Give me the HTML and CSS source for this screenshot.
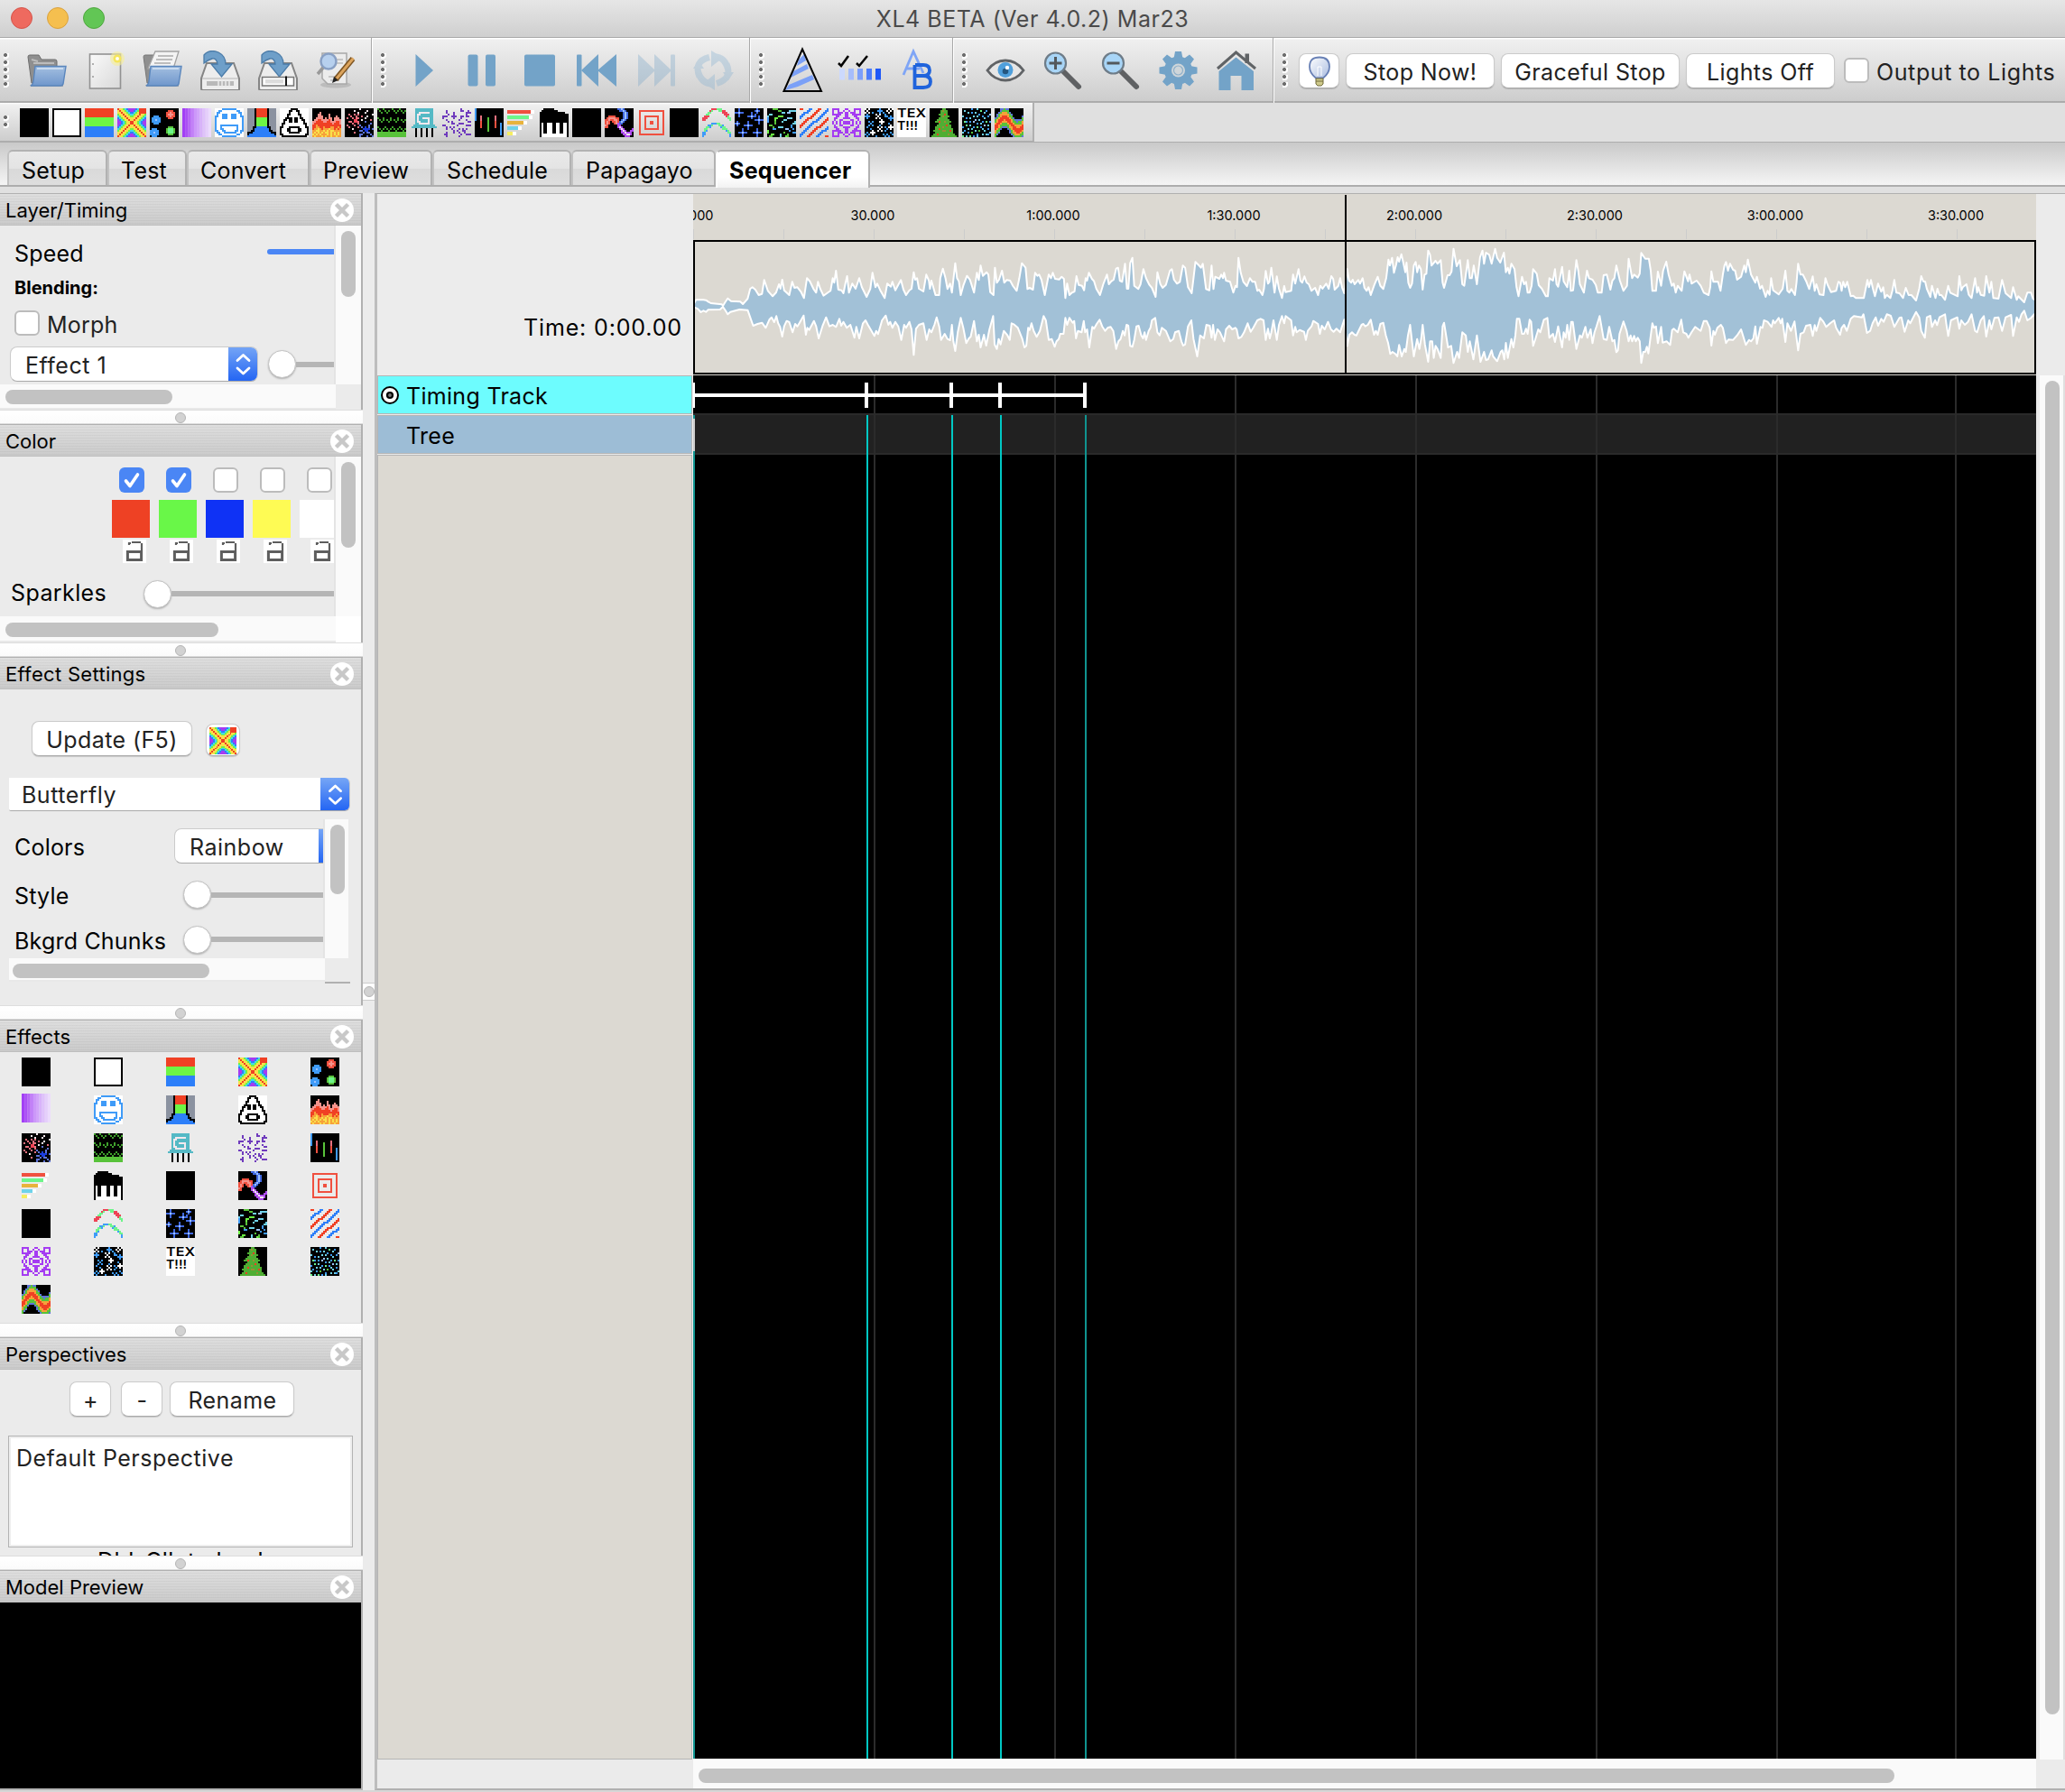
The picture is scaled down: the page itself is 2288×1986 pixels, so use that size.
FILE: index.html
```html
<!DOCTYPE html>
<html lang="en">
<head>
<meta charset="utf-8">
<title>XL4 BETA</title>
<link rel="stylesheet" href="styles.css">
</head>
<body>
<svg width="0" height="0" class="defs" aria-hidden="true">
  <defs>
    <linearGradient id="blueFolder" x1="0" y1="0" x2="0" y2="1"><stop offset="0" stop-color="#a3bfe0"/><stop offset="1" stop-color="#7097cc"/></linearGradient>
    <linearGradient id="paper" x1="0" y1="0" x2="1" y2="1"><stop offset="0" stop-color="#fafafa"/><stop offset="1" stop-color="#d9d9d9"/></linearGradient>
    <linearGradient id="bulbGlass" x1="0" y1="0" x2="1" y2="1"><stop offset="0" stop-color="#ffffff"/><stop offset="1" stop-color="#a9bce0"/></linearGradient>
    <symbol id="chev" viewBox="0 0 33 39"><path d="M10 15.5 L16.5 9.5 L23 15.5 M10 24 L16.5 30 L23 24" fill="none" stroke="#fff" stroke-width="2.8" stroke-linecap="round" stroke-linejoin="round"/></symbol>
    <symbol id="close" viewBox="0 0 26 26"><circle cx="13" cy="13" r="13" fill="#fff"/><path d="M8 8 L18 18 M18 8 L8 18" stroke="#c8c8c8" stroke-width="4.4" stroke-linecap="square"/></symbol>
    <symbol id="lock" viewBox="0 0 13 13"><rect width="13" height="13" fill="#fff"/><path d="M3.5 3 V2 H4.5 M5 1.5 H10 M10.5 2 V6" fill="none" stroke="#5e5e5e" stroke-width="1.1"/><path d="M2.700 6.700 H10.300 V11.300 H2.700 Z" fill="none" stroke="#5e5e5e" stroke-width="1.500"/></symbol>
    <symbol id="savebase" viewBox="0 0 44 44">
      <path d="M7 14 H37 L43 31 V43 Q43 44 41 44 H3 Q1 44 1 42 V31 Z" fill="#ededed" stroke="#858585" stroke-width="2"/>
      <path d="M4 5 Q10 -2 20 2 Q28 6 28 15 H35 L23.500 29 L12 15 H19 Q18 8 13 9 Q9 10 4 14 Z" fill="#6e9fc9" stroke="#4a7ba8" stroke-width="1.300"/>
    </symbol>
  </defs>
</svg>

<header class="titlebar">
  <div class="lights"><i class="red"></i><i class="amber"></i><i class="green"></i></div>
  <h1>XL4 BETA (Ver 4.0.2) Mar23</h1>
</header>

<div class="toolbar">
  <div class="group first w412"><span class="grip"><i></i><i></i><i></i><i></i><i></i></span>
    <svg class="ico" viewBox="0 0 44 44"><path d="M1 7 Q1 5 3 5 H13 L16 10 H31 Q33 10 33 12 V36 H5 Z" fill="#8f8f8f" stroke="#6d6d6d"/><path d="M5 10 L12 12 M7 14 H30" stroke="#bcbcbc" stroke-width="2"/><path d="M3 38 H40 V40 H4 Z" fill="#8a8a8a" opacity=".6"/><path d="M9 17.500 H43 L40 37 Q39.500 39 37 39 H4 Q6.500 38 7 34 Z" fill="url(#blueFolder)" stroke="#5a86bd" stroke-width="1.400"/><path d="M11 20 H40" stroke="#c9dbf0" stroke-width="2"/></svg>
    <svg class="ico" viewBox="0 0 44 44"><rect x="5.500" y="4" width="34" height="38" fill="url(#paper)" stroke="#929292" stroke-width="1.600"/><path d="M9 14 V16 M9 28 V30" stroke="#999" stroke-width="1.500"/><circle cx="36" cy="9" r="8" fill="#f6ef96" opacity=".6"/><circle cx="36" cy="9" r="4.500" fill="#f5e55c"/><circle cx="36" cy="9" r="2" fill="#fffef0"/></svg>
    <svg class="ico" viewBox="0 0 44 44"><path d="M1 7 Q1 5 3 5 H13 V36 H5 Z" fill="#8f8f8f" stroke="#777"/><path d="M14 1 H40 L34 20 H6 Z" fill="#f4f4f4" stroke="#a2a2a2" stroke-width="1.300"/><path d="M17 6 H34 M15 10 H33 M13 14 H31" stroke="#aaa" stroke-width="1.500"/><path d="M3 38 H40 V40 H4 Z" fill="#8a8a8a" opacity=".6"/><path d="M9 17.500 H43 L40 37 Q39.500 39 37 39 H4 Q6.500 38 7 34 Z" fill="url(#blueFolder)" stroke="#5a86bd" stroke-width="1.400"/><path d="M11 20 H40" stroke="#c9dbf0" stroke-width="2"/></svg>
    <svg class="ico" viewBox="0 0 44 44"><use href="#savebase"/><path d="M2 31 H42" stroke="#b5b5b5"/><rect x="7" y="34" width="30" height="5" fill="#b9b9b9"/><path d="M20 33 V40 M24 33 V40 M28 33 V40 M32 33 V40" stroke="#ececec" stroke-width="1.500"/></svg>
    <svg class="ico" viewBox="0 0 44 44"><use href="#savebase"/><rect x="4.500" y="29.500" width="35" height="9.500" fill="#fff" stroke="#777" stroke-width="1.500"/><rect x="8" y="32" width="20" height="4.500" fill="#dcdcdc"/><path d="M31 28.500 V39" stroke="#000" stroke-width="1.800"/></svg>
    <svg class="ico" viewBox="0 0 44 44"><ellipse cx="22" cy="38" rx="17" ry="3.500" fill="#aaa" opacity=".6"/><path d="M7 3 H34 V37 H13 L7 31 Z" fill="#ececec" stroke="#a8a8a8" stroke-width="1.500"/><path d="M22 10 H30 M22 14 H30 M14 29 H26 M16 33 H26" stroke="#bbb" stroke-width="1.500"/><circle cx="14" cy="12" r="8.500" fill="#b7d0ee" stroke="#89a0c4" stroke-width="2.500"/><path d="M8 19 L2 26" stroke="#999" stroke-width="3.500"/><path d="M41 9 L22 32" stroke="#7d5523" stroke-width="6"/><path d="M41.500 8.500 L23 31" stroke="#dca45d" stroke-width="3"/><path d="M18 36 L20 29 L24.500 33 Z" fill="#222"/></svg>
  </div>
  <div class="group w419"><span class="grip"><i></i><i></i><i></i><i></i><i></i></span>
    <svg class="ico steel" viewBox="0 0 44 44"><path d="M12.500 4 L32 22 L12.500 40 Z"/></svg>
    <svg class="ico steel" viewBox="0 0 44 44"><rect x="6.500" y="4.500" width="11" height="35" rx="2"/><rect x="26" y="4.500" width="11" height="35" rx="2"/></svg>
    <svg class="ico steel" viewBox="0 0 44 44"><rect x="5" y="4.500" width="34" height="35" rx="2"/></svg>
    <svg class="ico steel" viewBox="0 0 44 44"><rect x="-1" y="4.500" width="5.500" height="35" rx="1"/><path d="M23 4 V40 L4 22 Z M43 4 V40 L22 22 Z"/></svg>
    <svg class="ico steel dim" viewBox="0 0 44 44"><rect x="39" y="4.500" width="5" height="35" rx="1"/><path d="M3 4 V40 L22 22 Z M21 4 V40 L40 22 Z"/></svg>
    <svg class="ico dim" viewBox="0 0 44 44"><path d="M7 29 Q0 12 18 7.500 M26 36.500 Q44 31 37 15 M5 21 Q8 37 22 37 M39 23 Q36 7 24 7" fill="none" stroke="#7fadd0" stroke-width="7"/><path d="M20 0 L33 8 L20 18 Z M24 26 V44 L12 36 Z M33 24 H45 L39 33 Z M0 20 H12 L6 11 Z" fill="#7fadd0"/></svg>
  </div>
  <div class="group w225"><span class="grip"><i></i><i></i><i></i><i></i><i></i></span>
    <svg class="ico tall" viewBox="0 0 44 50"><path d="M18 13 L24 7 L26 14 L16 20 Z M12 26 L27 18 L29 23 L9 33 Z M7 41 L33 30 L35 35 L17 43 L3 47 Z" fill="#7ba0f7"/><path d="M22 1.500 L43 48 H1.500 Z" fill="none" stroke="#000" stroke-width="2"/></svg>
    <svg class="ico wide" viewBox="0 0 50 44"><path d="M1 14 L4 17 L12 6 M21 14 L24 17 L33 6" fill="none" stroke="#000" stroke-width="2.500"/><g><rect x="2" y="20" width="6" height="12.500" fill="#ccd9fd"/><rect x="12" y="20" width="6" height="12.500" fill="#a6bdfb"/><rect x="22" y="20" width="6" height="12.500" fill="#7b9efa"/><rect x="32" y="20" width="6" height="12.500" fill="#4c7cfa"/><rect x="42" y="20" width="6" height="12.500" fill="#1e58f8"/></g></svg>
    <svg class="ico" viewBox="0 0 44 44"><path d="M6 27 L17 1 L28 25 M10 20 H24" fill="none" stroke="#7fa5f6" stroke-width="2.800"/><path d="M19 16 H28 Q35 16 35 22 Q35 28 28 28 H19 M28 28 Q36 28 36 34.500 Q36 41 28 41 H18.500 V16" fill="none" stroke="#1f63dc" stroke-width="3.800"/></svg>
  </div>
  <div class="group w355"><span class="grip"><i></i><i></i><i></i><i></i><i></i></span>
    <svg class="ico" viewBox="0 0 44 44"><path d="M2 22 Q10 11 22 11 Q34 11 42 22 Q34 33 22 33 Q10 33 2 22 Z" fill="#e6e6e6" stroke="#606366" stroke-width="2.800"/><circle cx="22" cy="21.500" r="8.500" fill="#4f9fdb"/><circle cx="22" cy="23" r="3.300" fill="#26577f"/><circle cx="24" cy="19" r="2.200" fill="#fff"/></svg>
    <svg class="ico" viewBox="0 0 44 44"><path d="M21 22 L39 40" stroke="#5f6163" stroke-width="6" stroke-linecap="round"/><circle cx="13.500" cy="14" r="11.500" fill="#a8d5f7" stroke="#6e7c88" stroke-width="2.200"/><path d="M6.500 14 H20.500 M13.500 7 V21" stroke="#53585c" stroke-width="3"/></svg>
    <svg class="ico" viewBox="0 0 44 44"><path d="M21 22 L39 40" stroke="#5f6163" stroke-width="6" stroke-linecap="round"/><circle cx="13.500" cy="14" r="11.500" fill="#a8d5f7" stroke="#6e7c88" stroke-width="2.200"/><path d="M6.500 14 H20.500" stroke="#53585c" stroke-width="3"/></svg>
    <svg class="ico steel" viewBox="0 0 44 44"><circle cx="21.500" cy="22" r="15.500"/><path d="M18 1 h7 l1.500 8 h-10 z M18 43 h7 l1.500 -8 h-10 z M.5 18.500 v7 l8 1.500 v-10 z M42.500 18.500 v7 l-8 1.500 v-10 z M4 9.500 l5 -5 l7 5 l-7 7 z M39 9.500 l-5 -5 l-7 5 l7 7 z M4 34.500 l5 5 l7 -5 l-7 -7 z M39 34.500 l-5 5 l-7 -5 l7 -7 z"/><circle cx="21.500" cy="22" r="7.500" fill="#cfd6da"/><circle cx="21.500" cy="22" r="5" fill="none" stroke="#8fb0c9" stroke-width="1.200"/></svg>
    <svg class="ico" viewBox="0 0 44 44"><path d="M31.500 3.500 H36 V14 H31.500 Z" fill="#606366"/><path d="M1 20 L21.500 2 L43 20" fill="none" stroke="#606366" stroke-width="3"/><path d="M2.500 23 L21.500 7.500 L41 23 V44 H27.500 V28 H15.500 V44 H2.500 Z" fill="#73a3c8"/></svg>
  </div>
  <div class="group last"><span class="grip"><i></i><i></i><i></i><i></i><i></i></span>
    <button class="btn bulb"><svg viewBox="0 0 28 34"><path d="M14 1.500 Q25 1.500 25 12 Q25 19 18 24.500 H10 Q3 19 3 12 Q3 1.500 14 1.500 Z" fill="url(#bulbGlass)" stroke="#6880b5" stroke-width="1.800"/><path d="M12 22 V12 H16 V22" fill="none" stroke="#fff"/><path d="M10 25 H18 V31 L16 33 H12 L10 31 Z" fill="#cfca8c" stroke="#706a3a"/><path d="M10 28 H18" stroke="#706a3a"/></svg></button>
    <button class="btn b1">Stop Now!</button>
    <button class="btn b2">Graceful Stop</button>
    <button class="btn b3">Lights Off</button>
    <span class="check"></span><span class="outlab">Output to Lights</span>
  </div>
</div>

<div class="fxrow"><div class="fxbar"><span class="grip two"><i></i><i></i></span><div class="fxlist sprites"></div></div></div>

<nav class="tabs">
  <span class="tab t1">Setup</span><span class="tab t2">Test</span><span class="tab t3">Convert</span><span class="tab t4">Preview</span><span class="tab t5">Schedule</span><span class="tab t6">Papagayo</span><span class="tab t7 active">Sequencer</span>
</nav>

<main class="work">
  <aside class="side">
    <section class="panel p-layer">
      <h2>Layer/Timing<svg class="x"><use href="#close"/></svg></h2>
      <div class="scroller">
        <div class="content">
          <div class="row r-speed"><span>Speed</span><i class="track blue"></i></div>
          <div class="row r-blend">Blending:</div>
          <div class="row r-morph"><span class="check"></span><span class="soft">Morph</span></div>
          <div class="row r-effect"><span class="select"><b>Effect 1</b><svg class="chev"><use href="#chev"/></svg></span><i class="knob"></i><i class="track"></i></div>
        </div>
        <div class="vs"><i></i></div>
        <div class="hs"><i></i></div>
      </div>
    </section>
    <div class="sash"><i></i></div>
    <section class="panel p-color">
      <h2>Color<svg class="x"><use href="#close"/></svg></h2>
      <div class="scroller">
        <div class="content">
          <div class="colors">
            <div><span class="check on"><svg viewBox="0 0 28 28"><path d="M7.500 15 L12 20.500 L20.500 8" /></svg></span><i class="sw c1"></i><svg class="lk"><use href="#lock"/></svg></div>
            <div><span class="check on"><svg viewBox="0 0 28 28"><path d="M7.500 15 L12 20.500 L20.500 8" /></svg></span><i class="sw c2"></i><svg class="lk"><use href="#lock"/></svg></div>
            <div><span class="check"></span><i class="sw c3"></i><svg class="lk"><use href="#lock"/></svg></div>
            <div><span class="check"></span><i class="sw c4"></i><svg class="lk"><use href="#lock"/></svg></div>
            <div><span class="check"></span><i class="sw c5"></i><svg class="lk"><use href="#lock"/></svg></div>
          </div>
          <div class="row r-spark"><span>Sparkles</span><i class="knob"></i><i class="track"></i></div>
        </div>
        <div class="vs"><i></i></div>
        <div class="hs"><i></i></div>
      </div>
    </section>
    <div class="sash"><i></i></div>
    <section class="panel p-settings">
      <h2 class="loose">Effect Settings<svg class="x"><use href="#close"/></svg></h2>
      <div class="upd"><button class="btn">Update (F5)</button><span class="btn mini"><svg viewBox="0 0 16 16"><use href="#s-butterfly"/></svg></span></div>
      <div class="select wideSel"><b>Butterfly</b><svg class="chev"><use href="#chev"/></svg></div>
      <div class="inner">
        <div class="content">
          <div class="row r-colors"><span>Colors</span><span class="select cut"><b>Rainbow</b><em></em></span></div>
          <div class="row r-style"><span>Style</span><i class="knob"></i><i class="track"></i></div>
          <div class="row r-chunks"><span>Bkgrd Chunks</span><i class="knob"></i><i class="track"></i></div>
        </div>
        <div class="vs"><i></i></div>
        <div class="hs"><i></i></div>
        <div class="corner"></div>
      </div>
    </section>
    <div class="sash"><i></i></div>
    <section class="panel p-effects">
      <h2>Effects<svg class="x"><use href="#close"/></svg></h2>
      <div class="fxgrid sprites"></div>
    </section>
    <div class="sash"><i></i></div>
    <section class="panel p-persp">
      <h2>Perspectives<svg class="x"><use href="#close"/></svg></h2>
      <div class="pbtns"><button class="btn">+</button><button class="btn">-</button><button class="btn ren">Rename</button></div>
      <div class="list"><div>Default Perspective</div></div>
      <div class="hint"><span>Dbl-Clk to load</span></div>
    </section>
    <div class="sash"><i></i></div>
    <section class="panel p-preview">
      <h2>Model Preview<svg class="x"><use href="#close"/></svg></h2>
      <div class="black"></div>
    </section>
  </aside>
  <div class="vsash"><span><i></i></span></div>
  <section class="seq">
    <div class="time">Time: 0:00.00</div>
    <div class="right">
      <div class="ruler">
        <span class="zero">000</span><span>30.000</span><span>1:00.000</span><span>1:30.000</span><span>2:00.000</span><span>2:30.000</span><span>3:00.000</span><span>3:30.000</span>
      </div>
      <svg class="wave" viewBox="0 0 1488 150"><g class="shape"></g><rect x="1" y="1" width="1486" height="147" fill="none" stroke="#000" stroke-width="2"/></svg>
      <i class="playhead"></i>
    </div>
    <div class="gutter"></div>
    <div class="labels">
      <div class="lab timing"><svg viewBox="0 0 22 22"><circle cx="11" cy="11" r="9" fill="#fff" stroke="#000" stroke-width="2"/><circle cx="11" cy="11" r="3" fill="#777" stroke="#000" stroke-width="2.200"/></svg>Timing Track</div>
      <div class="lab tree">Tree</div>
      <div class="rest"></div>
    </div>
    <svg class="grid" viewBox="0 0 1488 1533">
      <rect width="1488" height="1533" fill="#000"/>
      <rect y="42" width="1488" height="46" fill="#2a2a2a"/><rect y="44" width="1488" height="42" fill="#212121"/>
      <path d="M201 0 V1533 M401 0 V1533 M601 0 V1533 M801 0 V1533 M1001 0 V1533 M1201 0 V1533 M1399 0 V1533" stroke="#2b2b2b" stroke-width="2"/>
      <path d="M193 44 V1533 M287 44 V1533 M341 44 V1533" stroke="#00c8c4" stroke-width="2"/>
      <path d="M1 44 V1533 M435 44 V1533" stroke="#109490" stroke-width="2"/>
      <path d="M1 48 V84" stroke="#ccc" stroke-width="2"/>
      <path d="M0 22 H434" stroke="#fff" stroke-width="4"/>
      <path d="M0 8 V36 M192 8 V36 M286 8 V36 M340 8 V36 M434 8 V36" stroke="#fff" stroke-width="4"/>
    </svg>
    <div class="bigv"><i></i></div>
    <div></div>
    <div class="bigh"><i></i></div>
    <div></div>
  </section>
</main>
<script src="app.js"></script>
</body>
</html>
```
FILE: styles.css
```css
* { box-sizing: border-box; }
body { margin: 0; width: 2288px; height: 1986px; overflow: hidden; display: flex; flex-direction: column; background: #d6d6d6; font-family: Inter, "Liberation Sans", sans-serif; font-size: 25px; letter-spacing: .2px; color: #000; }
i, em, b { font-style: normal; font-weight: 400; display: block; }
svg { display: block; flex: none; }
.defs { position: absolute; }
h1, h2 { margin: 0; font-weight: 400; }

.titlebar { height: 42px; flex: none; position: relative; display: flex; align-items: center; justify-content: center; background: linear-gradient(#e6e6e6, #cfcfcf); border-bottom: 1px solid #a9a9a9; }
.titlebar h1 { font-size: 25px; line-height: 40px; color: #4a4a4a; letter-spacing: .53px; }
.lights { position: absolute; left: 12px; top: 8px; display: flex; gap: 16px; }
.lights i { width: 24px; height: 24px; border-radius: 50%; }
.lights .red { background: #ee6a5f; border: 1px solid #d5544a; }
.lights .amber { background: #f5bf4f; border: 1px solid #d9a13d; }
.lights .green { background: #62c655; border: 1px solid #4fa73f; }

.toolbar { height: 72px; flex: none; display: flex; background: linear-gradient(#fff 0, #fff 1px, #f0f0f0 2px, #cdcdcd 70px, #a9a9a9 70px, #b0b0b0 72px); }
.group { display: flex; align-items: center; gap: 20px; height: 72px; padding-left: 7px; border-left: 1px solid #fff; border-right: 1px solid #a9a9a9; }
.group.first { padding-left: 2px; border-left: 0; }
.w412 { width: 412px; } .w419 { width: 419px; } .w225 { width: 225px; } .w355 { width: 355px; }
.group.last { flex: 1; gap: 0; border-right: 0; padding-top: 1px; }
.grip { width: 8px; flex: none; display: flex; flex-direction: column; gap: 1px; padding-left: 2px; }
.grip i { width: 6px; height: 7px; background: radial-gradient(circle at 2px 2px, #6d6d6d 0 1.800px, #fff 2.300px 4px, transparent 4.500px); }
.ico { width: 44px; height: 44px; overflow: visible; }
.ico.tall { height: 50px; }
.ico.wide { width: 50px; margin: 0 -3px; }
.steel { fill: #73a3c8; }
.dim { opacity: .32; }
.btn { height: 39px; border: 1px solid #cbcbcb; border-bottom-color: #aaa; border-radius: 8px; background: #fff; box-shadow: 0 1px 1px rgba(0,0,0,.15); font: inherit; letter-spacing: .4px; color: #222; padding: 2px 0 0; text-align: center; line-height: 34px; white-space: nowrap; }
.bulb { width: 45px; margin-left: 12px; padding: 1px 0 0 8px; }
.bulb svg { width: 28px; height: 34px; }
.b1 { width: 165px; margin-left: 7px; } .b2 { width: 198px; margin-left: 7px; } .b3 { width: 165px; margin-left: 7px; }
.check { width: 28px; height: 28px; flex: none; border: 2px solid #bcbcbc; border-radius: 6px; background: #fff; }
.check.on { background: #4a86f5; border: 0; }
.check path { fill: none; stroke: #fff; stroke-width: 3.600; stroke-linecap: round; stroke-linejoin: round; }
.last .check { margin: -2px 0 0 10px; }
.outlab { margin-left: 8px; padding-top: 3px; color: #222; white-space: nowrap; letter-spacing: .6px; }

.fxrow { height: 44px; flex: none; background: #e0e0e0; border-bottom: 1px solid #adadad; }
.fxbar { width: 1146px; height: 43px; display: flex; align-items: center; padding: 1px 0 0 2px; background: linear-gradient(#fff, #f0f0f0 2px, #cdcdcd); border-right: 2px solid #b0b0b0; border-bottom: 1px solid #adadad; }
.fxlist { display: flex; gap: 4px; margin-left: 12px; }
.sprites svg { width: 32px; height: 32px; }

.tabs { height: 56px; flex: none; display: flex; align-items: flex-start; padding: 8px 0 0 8px; background: linear-gradient(#c9c9c9, #f5f5f5 47px, #adadad 47px, #adadad 49px, #e0e0e0 49px); }
.tab { height: 39px; padding-left: 14px; line-height: 43px; white-space: nowrap; border: 2px solid #b2b2b2; border-bottom: 0; border-left-color: #c2c2c2; border-radius: 6px 6px 0 0; background: linear-gradient(#e9e9e9, #e4e4e4 50%, #d9d9d9 50%, #dedede); }
.t1 { width: 111px; } .t2 { width: 88px; } .t3 { width: 136px; } .t4 { width: 136px; } .t5 { width: 154px; } .t6 { width: 160px; } .t7 { width: 171px; }
.t2, .t3, .t4 { padding-left: 13px; }
.tab.active { height: 42px; padding-left: 13px; font-weight: 700; letter-spacing: .3px; border-left-color: #fff; background: linear-gradient(#fff 70%, #f2f2f2); }

.work { flex: 1; display: flex; min-height: 0; }
.side { width: 402px; height: 1770px; flex: none; border-bottom: 2px solid #b5b5b5; }
.panel { width: 402px; border-right: 2px solid #b0b0b0; background: #ebebeb; overflow: hidden; }
.panel h2 { height: 36px; display: flex; align-items: center; justify-content: space-between; padding: 1px 8px 0 6px; font-size: 22px; letter-spacing: 0; border-top: 1px solid #b0b0b0; border-bottom: 1px solid #bdbdbd; background: repeating-linear-gradient(transparent 0 2px, rgba(0,0,0,.035) 2px 3px), linear-gradient(#dedede, #cbcbcb); }
.panel h2.loose { letter-spacing: .3px; }
.x { width: 26px; height: 26px; }
.p-layer { height: 240px; } .p-color { height: 242px; } .p-settings { height: 386px; } .p-effects { height: 336px; } .p-persp { height: 242px; } .p-preview { height: 242px; }
.sash { width: 402px; height: 16px; background: linear-gradient(#fff, #fbfbfb); border-top: 1px solid #ddd; border-bottom: 1px solid #ddd; padding: 2px 0 0 194px; }
.sash i, .vsash i { width: 12px; height: 12px; border-radius: 50%; background: #d2d2d2; border: 1px solid #b5b5b5; }

.scroller { display: grid; grid-template-columns: 372px 28px; grid-template-rows: 176px 28px; }
.p-color .scroller { grid-template-rows: 177px 29px; background: linear-gradient(90deg, transparent 370px, #fff 370px); }
.content { overflow: hidden; border-right: 2px solid #e4e4e4; background: #ebebeb; }
.vs { background: #fafafa; padding: 6px 0 0 6px; }
.vs i { width: 16px; height: 73px; border-radius: 8px; background: #c2c2c2; }
.hs { background: #fafafa; border-bottom: 2px solid #e8e8e8; padding: 6px 0 0 6px; }
.hs i { width: 185px; height: 16px; border-radius: 8px; background: #c2c2c2; }
.p-color .vs i { height: 95px; } .p-color .hs i { width: 236px; } .p-color .hs { padding-top: 7px; }
.row { display: flex; align-items: center; white-space: nowrap; }
.row > span:first-child { flex: none; }
.track { height: 6px; flex: 1; background: #b5b5b5; }
.track.blue { background: #4a86f5; border-radius: 3px 0 0 3px; }
.knob { width: 31px; height: 31px; flex: none; border-radius: 50%; background: #fff; border: 1px solid #c2c2c2; box-shadow: 0 1px 2px rgba(0,0,0,.25); }
.r-speed { height: 60px; padding-left: 16px; }
.r-speed > span:first-child { width: 280px; padding-top: 2px; }
.r-speed .track { margin-top: -2px; }
.r-blend { height: 18px; padding-left: 16px; font-weight: 700; font-size: 20px; letter-spacing: 0; }
.r-morph { height: 55px; padding: 5px 0 0 16px; gap: 8px; color: #222; }
.soft { padding-top: 3px; }
.r-effect { height: 40px; padding: 1px 0 0 11px; }
.select { display: flex; width: 275px; height: 39px; flex: none; background: #fff; border: 1px solid #cbcbcb; border-bottom-color: #aaa; border-radius: 8px; overflow: hidden; color: #222; letter-spacing: .5px; }
.select b { flex: 1; padding: 3px 0 0 16px; line-height: 35px; }
.chev { width: 33px; height: 39px; margin: -1px -1px -1px 0; background: linear-gradient(#76a6f6, #2264f3); }
.r-effect .knob { margin-left: 11px; }
.colors { display: flex; gap: 10px; padding: 12px 0 0 124px; }
.colors > div { width: 42px; flex: none; }
.colors .check { display: block; margin: 0 0 8px 8px; }
.sw { width: 42px; height: 42px; }
.c1 { background: #ee4124; } .c2 { background: #69f748; } .c3 { background: #0f32f5; } .c4 { background: #fefb54; } .c5 { background: #fff; }
.lk { width: 26px; height: 26px; margin: 2px 0 0 12px; }
.r-spark { height: 36px; margin-top: 16px; padding-left: 12px; }
.r-spark > span:first-child { width: 147px; letter-spacing: .4px; padding-bottom: 2px; }

.upd { display: flex; padding: 35px 0 0 35px; height: 98px; }
.upd .btn { width: 178px; }
.upd .mini { width: 38px; height: 36px; margin: 3px 0 0 15px; padding: 3px; }
.mini svg { width: 30px; height: 30px; }
.wideSel { width: 378px; height: 37px; margin-left: 10px; border-radius: 0 6px 6px 2px; border-top: 0; border-left: 0; }
.wideSel b { padding: 0 0 0 14px; line-height: 39px; }
.wideSel .chev { height: 37px; margin: 0 -1px 0 0; }
.inner { display: grid; grid-template-columns: 350px 28px; grid-template-rows: 154px 28px; margin: 9px 0 0 10px; }
.r-colors { height: 58px; padding-top: 1px; }
.inner .row .cut { width: 172px; border-radius: 8px 0 0 8px; margin-left: 9px; }
.cut b { padding-left: 16px; }
.cut em { width: 11px; margin: -1px 0; background: linear-gradient(#76a6f6, #2264f3); }
.r-style { height: 51px; } .r-chunks { height: 48px; }
.inner .row > span:first-child { width: 174px; padding: 3px 0 0 6px; }
.inner .knob { margin-left: 19px; }
.inner .vs { width: 26px; } .inner .vs i { height: 77px; }
.inner .hs { padding-left: 4px; height: 26px; } .inner .hs i { width: 218px; }
.corner { border-bottom: 2px solid #b0b0b0; height: 28px; }

.fxgrid { display: grid; grid-template-columns: repeat(5, 32px); column-gap: 48px; row-gap: 10px; padding: 6px 0 0 24px; }
.fxgrid svg:nth-child(6) { margin-top: -2px; }

.pbtns { display: flex; padding: 13px 0 0 77px; gap: 11px; }
.pbtns .btn { width: 46px; padding-left: 1px; }
.pbtns .ren { width: 138px; margin-left: -3px; }
.list { width: 382px; height: 124px; margin: 21px 0 0 9px; border: 1px solid #b3b3b3; background: #fff; box-shadow: inset 0 0 0 2px #eee; padding: 8px 0 0 8px; line-height: 32px; color: #222; letter-spacing: .5px; }
.hint { height: 10px; overflow: hidden; padding-left: 108px; line-height: 31px; letter-spacing: .5px; }
.black { height: 206px; background: #000; }

.vsash { width: 13px; flex: none; height: 1770px; background: #ebebeb; padding-top: 875px; }
.vsash span { display: block; height: 20px; background: #fff; border-top: 1px solid #ccc; border-bottom: 1px solid #ccc; padding: 3px 0 0 1px; }
.seq { flex: 1; height: 1770px; border: solid #b0b0b0; border-width: 1px 0 2px 3px; border-left-color: #bdbdbd; display: grid; grid-template-columns: 350px 1488px 32px; grid-template-rows: 201px 1534px 32px; background: #ebebeb; }
.time { background: #ececec; text-align: right; padding: 131px 12px 0 0; line-height: 34px; font-size: 25px; letter-spacing: .85px; }
.right { position: relative; padding-top: 1px; background: #dcd9d2; }
.ruler { height: 50px; display: flex; padding-left: 99px; background: repeating-linear-gradient(90deg, #ccc 0 1px, transparent 1px 100px) 0 38px / 100% 11px no-repeat; font-size: 14.500px; letter-spacing: 0; line-height: 46px; }
.ruler span { width: 200px; flex: none; text-align: center; }
.ruler .zero { width: 123px; margin-left: -99px; margin-right: -24px; text-align: left; text-indent: -5px; overflow: hidden; }
.wave { width: 1488px; height: 150px; }
.playhead { position: absolute; left: 722px; top: 1px; width: 2px; height: 199px; background: #000; }
.labels { display: flex; flex-direction: column; border-right: 1px solid #eee; }
.lab { height: 43px; margin-bottom: 1px; border: 1px solid #b5b5b5; display: flex; align-items: center; padding: 2px 0 0 2px; letter-spacing: .3px; }
.lab svg { width: 22px; height: 22px; margin: -2px 7px 0 0; }
.timing { background: #6dfcfe; }
.tree { background: #9dbdd6; padding-left: 31px; }
.rest { flex: 1; background: #dcd9d2; border: 1px solid #b5b5b5; }
.grid { width: 1488px; height: 1533px; }
.bigv { margin-left: 4px; background: #fafafa; border-right: 2px solid #e0e0e0; padding: 6px 0 0 6px; }
.bigv i { width: 16px; height: 1478px; border-radius: 8px; background: #c2c2c2; }
.bigh { background: #fafafa; padding: 10px 0 0 6px; }
.bigh i { width: 1325px; height: 16px; border-radius: 8px; background: #c2c2c2; }
```
FILE: app.js
```js
const NS = 'http://www.w3.org/2000/svg';

/* ---- effect icons: 16x16 pixel sprites ---- */
const PAL = {
  k: '#000', w: '#fff', r: '#f04024', g: '#6df545', b: '#2d7ff9', A: '#3f9bf8', N: '#8b92a0',
  F: '#f4938c', o: '#f7a13a', y: '#f8e04a', P: '#e8707e', R: '#ee4355', W: '#f3e9ee', V: '#5f74d8', U: '#1a3de0',
  L: '#3fa02c', M: '#58c23a', T: '#55b9c5', Q: '#6f3bbd', E: '#b04df0', D: '#4169e1', c: '#42d7f0', p: '#a53cf2',
  O: '#e8b33c', C: '#6fd3ea', Y: '#f5ee62', H: '#9cc3ff', S: '#f0503f', m: '#4fae33', X: '#9a8f35', Z: '#6df58a', B: '#3a5fe0', t: '#1d7f86'
};
const rows = s => s.trim().split(/\s+/);
const fn = f => Array.from({ length: 16 }, (_, y) => Array.from({ length: 16 }, (_, x) => f(x, y)).join(''));
const mirror = q => { const t = rows(q).map(r => r + [...r].reverse().join('')); return t.concat([...t].reverse()); };

const SPRITES = {
  off: fn(() => 'k'),
  on: fn((x, y) => (x % 15 && y % 15) ? 'w' : 'k'),
  bars: fn((x, y) => y < 5 ? 'r' : y < 10 ? 'g' : 'b'),
  butterfly: fn((x, y) => (x > 11 && y < 3) ? 'r' : 'ryygcbppp'[Math.min(Math.abs(x - y), Math.abs(15 - x - y))]),
  circles: rows(`kkkkkkkkkkkkkkkk kkkkkkkkkkSSSkkk kkkkkkkkkSSFSSkk kkkkkkkkkSFFFSkk kkAAAkkkkSSFSSkk kAAAAAkkkkSSSkkk kAAHAAkkkkkkkkkk
    kAAAAAkkkkkkkkkk kkAAAkkkkkkkkkkk kkkkkkkkkkkkkkkk kkkkkkkkkkMMMkkk kAAAkkkkkMZZZMkk AAAAAkkkkMZZZMkk AAHAAkkkkMZZZMkk AAAAAkkkkkMMMkkk kAAAkkkkkkkkkkkk`),
  fill: null,
  face: rows(`wwwwAAAAAAAAwwww wwAAwwwwwwwwAAww wAAwwwwwwwwwwAAw wAwwAAAwwAAAwwAw AAwwAAAwwAAAwwAA AwwwAAAwwAAAwwwA AwwwwwwwwwwwwwwA
    AwwwwwwwwwwwwwwA AwwwwwwwwwwwwwwA AwwAAAAAAAAAAwwA AwwAwwwwwwwwAwwA AwwAAwwwwwwwAwwA AAwwAAwwwwwAAwAA wAAwwAAAAAAAwwAw wwAAwwwwwwwwAAww wwwwAAAAAAAAwwww`),
  fan: rows(`NNNNkrrrrrrkNNNN NNNNkrrrrrrkNNNN NNNNkrrrrrrkNNNN NNNNkrrrrrrkNNNN NNNNkrrrrrrkNNNN NNNNkggggggkNNNN NNNNkggggggkNNNN NNNNkggggggkNNNN
    NNNNkggggggkNNNN NNNNkggggggkNNNN NNNkkbbbbbbkkNNN NNNkbbbbbbbbkNNN NNkkbbbbbbbbkkNN kkkbbbbbbbbbbkkk kbbbbbbbbbbbbbbk bbbbbbbbbbbbbbbb`),
  ghost: rows(`wwwwwwkkkkwwwwww wwwwwkkwwkkwwwww wwwwwkwwwwkwwwww wwwwkkwwwwkkwwww wwwwkwwwwwwkwwww wwwkkkkwkkwkkwww wwkkwkkwkkwwkkww wwkwwkkwkkwwwkww
    wkkwwwwwwwwwwkkw wkwwwwwwwwwwwwkw kkwwwkkkkkkwwwkk kwwwkkwwwwkkwwwk kwwwkkwwwwkkwwwk kwwwwkkkkkkwwwwk kkwwwwwwwwwwwwkk wkkkkkkkkkkkkkkw`),
  fire: rows(`kkkkkkkkkkkkkkkk kkkkkkkkkkkkkkkk kkkkFkkkkkkkkkkk kkkFFkkkkFkkkkkk kkkFFFkkkFkkkFkk kkFFFFkFkFFkFFFk kFFrrFFFFrFkFFFF FFrrrrFFrrFFFrrF
    FrrrrrrrrrrFrrrF rrorrrrrrrrrrrrr rroorrorrroorror rooyoroooyoororo ooyyooyoyoyyoooo oyoyoyoyyoyoyoyo yoyoyoooyoyoyoyo oyoooyoyooyooyoo`),
  works: rows(`kkkkkkkkWkkkkkkk kkkkkWkkkkkkWkkk kkkkkkkWkkkWkkkk kkPkkPkPkkkkkkkW kkkPkkPkkPkkWkkk kPkkPkPPkkkWkkkk kkkkkRRkkWkkkkPk kkPPkRRPkkkVkkkk
    kkkkPkkPkkkkkkVk kPkkkPkkVkkkkVkk kkPkkkkPkVkUkVkk kkkkWkkkkkUUUUkV kkkkkkkkVVkUUkkk kkkkkPkkkkVkVVkk kkkkkkkkVVkkkkVk kkkkkkkkVkkkVkkV`),
  garland: rows(`LkkLkkkkLkkkLkkk kLkkLkLkkLkLkLkL kkLkkLkkkkLkkkLk kkkkkkkkkkkkkkkk kkkkkkkkkkkkkkkk LkkLkkkLkkkLkkkk kLkLkLkLkLkLkLkL kkLkkkLkkkLkkkLk
    kkkkkkkkkkkkkkkk kkkkkkkkkkkkkkkk LkkkLkkkLkkkLkkk kLkLkLkLkLkLkLkL kkLkkkLkkkLkkkLk MMMMMMMMMMMMMMMM MMMMMMMMMMMMMMMM MMMMMMMMMMMMMMMM`),
  jelly: rows(`...TTTTTTTTTT... ...TTTTTTTTTT... ...TTWWWWWWTT... ...TWWTTTTTTT... ...TWTTTTTTTT... ...TWTTWWWWTT... ...TWTTTTTWTT... ...TWWTTTTWTT...
    ...TTWWWWWWTT... ..TTTTTTTTTTTT.. .TTTTTTTTTTTTTT. ...k..k..k..k... ...k..k..k..k... ...k..k..k..k... ...k..k..k..k... ...k..k..k..k...`),
  life: rows(`..........Q..... ..Q.......QQ..Q. ..Q...Q......QQQ ...Q..Q......Q.. QQQ..QQQ..QQ.QQ. Q.....Q...Q..... ..Q......Q...Q.. ...Q.Q........QQ
    .....QQ..QQQ.... QQ......Q....QQQ ..Q.Q.Q......... ..Q..Q...Q.Q.Q.. ......Q.Q..QQ... ..Q...Q..Q..Q... .QQ.......Q..QQQ ..Q......Q......`),
  meteors: fn((x, y) => x === 0 && y < 7 ? 'A' : x === 3 && y > 3 && y < 11 ? (y < 7 ? 'P' : 'S') : x === 7 && y > 4 && y < 13 ? 'M' : x === 11 && y > 3 && y < 11 ? (y < 7 ? 'P' : 'S') : x === 14 && y > 7 && y < 15 ? 'A' : 'k'),
  music: fn((x, y) => { const i = Math.floor((y - 1) / 3); if (y < 1 || (y - 1) % 3 > 1 || i > 4) return '.'; const e = [13, 12, 9, 6, 3][i]; return x < e ? 'SZOCY'[i] : x < e + 2 ? 'w' : '.'; }),
  piano: rows(`..kkkkkk........ .kkkkkkkkk...... kkkkkkkkkkkkkk.. kkkkkkkkkkkkkkkk kkkkkkkkkkkkkkkk kkkkkkkkkkkkkkkk kkkkkkkkkkkkkkkk kkkkkkkkkkkkkkkk
    kwkkwwwkkwwkkwwk kwkkwwwkkwwkkwwk kwkkwwwkkwwkkwwk kwkkwwwkkwwkkwwk kwkkwwwkkwwkkwwk kwkkwwwkkwwkkwwk kwwwwwwwwwwwwwwk kwwwwwwwwwwwwwwk`),
  pics: fn(() => 'k'),
  pinwheel: rows(`kkkkkkkDDHDkkkkk kkkkkkkkDDHDkkkk kkkkkkkkkkDHDkkk kkkkkkkkkkDHDkkk kkSSSSkkkkDHDkkk kSFFFFSSkkDHDkkk SSFSSFFSkDHDkkkk SFSkSSFSDHDkkkkk
    SFSkkSFEDDkkkkkk FSkkkkkEEkkkkkkk SSkkkkkEWEkkkkkk kkkkkkkkEWEkkkkE kkkkkkkkkEWEkkEE kkkkkkkkkEEWEEEk kkkkkkkkkkEEWWEk kkkkkkkkkkkEEEkk`),
  ripple: fn((x, y) => { const d = Math.max(Math.abs(x - 7.5), Math.abs(y - 7.5)); return d === 6.5 || d === 3.5 || d < 1 ? 'S' : '.'; }),
  shader: fn(() => 'k'),
  arches: rows(`.....RRRZZZ..... ....RZ...ZZRR... ...ZZ......RRR.. ..ZZ........RRR. .RRR.........RZ. RRR...........ZZ RR.............Z ................
    .....AAAZZ...... ...AAZ...ZZA.... ..ZZA.....AZZ.. .ZZ........ZZZ.. .ZA..........AZ. AA............ZZ AA.............A A..............A`),
  stars: rows(`kkDkkkkkkkkkDkkk kkDkkkkkkkkDHDkk DDHDDkkkkDkkDkkk kkDkkkkkkDkDkkkk kkDkkkkDDHDDkDkk kkkkkkkkkDkkkDkk kkkkkkkkkkkDDHDD kDkkkkkDkkkkkDkk
    DHDkkkkDkkkkkDkk kDkkkDDHDDkkkkkk kkkkkkkDkkkkkkkk kkkkDkkDkkkkDkkk kkkkDkkkkkkkDkkk kkDDHDDkkkDDHDDk kkkkDkkkkkkkDkkk kkkkDkkkkkkkDkkk`),
  snakes: rows(`kkkMMMkkkkkkkkkk kkkkkkMMkkkkCCCC kkkkkkkkCCkHHkkk kCCkkkkkkkkkkkkk Ckkkkkgggkkkkkkk AkkkggkkkkkHCCkk AkkkgkkkkCCkkkkk AkkkMkkkCkkkkkkC
    kkkkMkkkkkkkkkCC kMMkkkkkkkkkkAkk kkkMkkCCCkkkkAkk kkkAAkkkkkHHkkAk gkkkkkkkkkkkAkkk gkkkkkkkkMkkkkAA kkggkkkCkkkMkkkk kMMkkkkCkkgMkkkk`),
  stripes: fn((x, y) => { const v = (x + y + (x > y ? 0 : 1) + 15) % 10; return v < 2 ? 'b' : v >= 5 && v < 7 ? 'r' : '.'; }),
  kalei: mirror('pppp...p p..p..p. p..ppp.p ppppp..p ..pp...p .pp...pp .p..pp.. p.p.p.pp'),
  flakes: rows(`wkwkkkkkAkkkkwkw kwkkkkkAAAkkwkwk wkwkAkkkAkAkkwkk kAkkkkwkwkkAkkkk AAAkkkkwkkkAAkAk kAkkkkwkwkkkkAAA kkkkkkkkkwkkkkAk kkAkAkkkwwwkkkkk
    kkkAkkkkkwkkkAkk kkAkAkkkAkkkkkwk kAkkkkkwkwkAkwww kkkAkkkkwkkkAkwk kkkkwkkwkwkAkkkk kAkwwwkkkkkkkkAk AkAkwkkkkkAkAkkA kAkkkkAkkkkAkAkk`),
  text: null,
  tree: rows(`kkkkkkkmmkkkkkkk kkkkkkmXmmkkkkkk kkkkkkmmmmkkkkkk kkkkkmmmrmkkkkkk kkkkkkmXmmmkkkkk kkkkkmmmmmkkkkkk kkkkmmmmmmmkkkkk kkkmmrmmXmmmkkkk
    kkkkkmmmmmmkkkkk kkkkmmmmmrmmkkkk kkkmmmmXmmmmkkkk kkkmmrmmmmmmmkkk kkmmmmmXXmmrmkkk kkkmmmmmmmmmmkkk kkmmrmmmmmXmmmkk kmmmmmmmmmmmmmmk`),
  twinkle: rows(`kkkkkAkkCkkkkkkk kCkkkkkkkkZkkAkk kkkCkAkCkkkkCkkk kkkkkkkkkAkkkkkH CkkkkkCkCkkAkkAk kkAkCkkkkkkkCkkk kkkkkkkHkCkkkkkk kZAkAkHkkkkAkZkA
    kkkkkkkkAkCkkkkk kkZkCkkkkkkkHkCk AkkkkkAkZkAkkkkk kkkCkCkkkkkCkkAk kAkkkkkCkMkkCkkk CkkAkMkkkkkkkkkC kkkkkkkkAkkCkCAk ZkCkZkAkCkkkkkkk`),
  wave: fn((x, y) => { const d = Math.abs(y - (8.2 - 3.7 * Math.sin((x - 1.4) / 7.3 * Math.PI))); return d < 1.3 ? 'r' : d < 2.9 ? 'o' : d < 4.8 ? 'M' : d < 6 ? 'V' : 'k'; })
};

const el = (tag, attrs, parent) => {
  const e = document.createElementNS(NS, tag);
  for (const k in attrs) e.setAttribute(k, attrs[k]);
  parent.appendChild(e);
  return e;
};
const defs = document.querySelector('.defs defs');
for (const [name, grid] of Object.entries(SPRITES)) {
  const sym = el('symbol', { id: 's-' + name, viewBox: '0 0 16 16' }, defs);
  if (name === 'fill') {
    ['#a23ff5', '#ab50f5', '#b767f6', '#c281f8', '#cc98f9', '#d2a4fa', '#d8b3fa', '#dfc2fb', '#e5cffb', '#ecdcfc']
      .forEach((c, i) => el('rect', { x: i * 1.6, width: 1.7, height: 16, fill: c }, sym));
  } else if (name === 'text') {
    const type = { x: 0, 'font-size': 6.6, 'font-weight': 600, 'letter-spacing': 0, 'font-family': 'Inter, sans-serif', lengthAdjust: 'spacingAndGlyphs' };
    el('rect', { width: 16, height: 16, fill: '#fff' }, sym);
    el('text', { ...type, y: 5, textLength: 16 }, sym).textContent = 'TEX';
    el('text', { ...type, y: 12, textLength: 11.5 }, sym).textContent = 'T!!!';
  } else {
    grid.forEach((line, y) => {
      for (let x = 0; x < 16;) {
        let n = 1;
        while (x + n < 16 && line[x + n] === line[x]) n++;
        if (PAL[line[x]]) el('rect', { x, y, width: n, height: 1, fill: PAL[line[x]], 'shape-rendering': 'crispEdges' }, sym);
        x += n;
      }
    });
  }
}
document.querySelectorAll('.sprites').forEach(box => {
  Object.keys(SPRITES).forEach(n => el('use', { href: '#s-' + n }, el('svg', { viewBox: '0 0 16 16' }, box)));
});

/* ---- audio waveform envelope: x0/sx place each stretch of samples, y is in thirds of a pixel ---- */
const WAVE = [
  { x0: -358, sx: 2.45,
    top: '877,400 885,382 905,382 912,383 918,388 925,393 955,397 958,402 965,388 971,377 980,386 1005,388 1012,396 1018,388 1025,378 1032,345 1038,340 1046,348 1055,366 1064,362 1070,316 1080,352 1093,370 1102,358 1110,330 1114,345 1119,315 1124,350 1138,366 1146,322 1152,342 1160,340 1170,356 1178,376 1186,310 1194,320 1204,346 1211,358 1216,322 1222,345 1231,368 1243,358 1250,352 1256,310 1260,325 1265,285 1271,348 1280,350 1285,360 1290,330 1295,303 1300,358 1309,328 1318,345 1328,310 1335,340 1348,372 1358,345 1364,292 1372,340 1377,328 1385,350 1397,376 1404,328 1414,338 1418,322 1426,350 1441,316 1448,348 1455,366 1464,350 1470,345 1476,290 1480,315 1485,310 1490,345 1502,354 1510,298 1517,318 1520,345 1524,318 1535,366 1545,366 1548,310 1555,278 1562,310',
    bot: '877,405 890,412 898,423 905,418 912,422 918,415 950,414 958,405 965,418 971,430 978,422 1003,414 1025,416 1032,440 1040,468 1052,462 1064,458 1074,475 1084,448 1090,440 1097,456 1103,436 1108,460 1113,472 1119,504 1124,470 1131,452 1138,456 1147,490 1154,462 1160,470 1166,458 1177,434 1183,498 1187,475 1192,482 1205,452 1211,470 1218,510 1228,470 1238,440 1247,470 1256,465 1265,472 1274,445 1279,468 1285,455 1294,475 1304,465 1315,508 1320,472 1328,510 1338,460 1345,450 1352,466 1369,502 1374,485 1379,496 1390,450 1400,434 1407,465 1412,455 1418,475 1426,455 1434,470 1442,515 1450,465 1455,475 1464,455 1470,480 1476,565 1482,478 1490,465 1502,460 1511,515 1518,480 1524,490 1532,465 1538,440 1545,470 1550,515 1560,495' },
  { x0: 232, sx: 2.45,
    top: '122,346 129,328 134,358 143,260 148,310 153,320 158,366 165,335 175,302 183,315 194,358 202,292 207,316 212,268 218,302 228,290 233,298 238,356 247,366 251,275 256,325 262,315 270,285 276,325 283,316 292,318 300,336 310,352 317,310 324,260 334,275 339,346 345,342 354,348 360,292 366,302 371,298 377,315 386,366 397,298 403,310 408,292 414,312 425,314 432,305 438,312 442,376 447,328 453,366 460,358 467,354 472,303 478,332 487,335 493,350 497,310 501,318 506,292 514,312 520,320 526,345 536,366 545,330 555,298 560,330 567,320 573,315 580,278 585,275 590,318 596,322 604,262 609,345 613,345 618,260 624,242 629,335 640,346 646,330 654,280 661,310 670,332 677,342 687,372 692,290 700,330 706,342 715,332 726,285 731,280 737,315 745,328 753,322 761,268 767,275 775,340 785,360 790,310 795,256 805,268 810,275 815,262 824,346 833,350 839,268 844,346 849,305 860,312 865,298 870,310 873,292 878,318 889,322 898,358 904,335 908,340 912,242 918,292 925,322 935,336 943,310 950,322 957,322 963,352 968,348 977,366 981,346 986,286 992,328 996,322 1001,275 1010,358 1016,304 1022,345 1030,376 1036,336 1040,356 1055,352 1060,298 1066,328 1075,280 1080,318 1085,325 1091,304 1097,325 1103,330 1110,352 1120,342 1128,366 1134,335 1140,345 1150,328 1157,345 1164,303 1169,312 1173,348 1183,335 1188,310 1193,340 1199,360 1207,280 1212,318 1218,325 1222,315 1227,330 1237,316 1242,328 1249,310 1254,342 1260,352 1265,340 1271,366 1280,335 1290,305 1297,335 1305,346 1313,310 1319,248 1323,268 1329,242 1334,292 1340,265 1344,240 1348,255 1354,230 1360,262 1365,290 1368,258 1373,325 1378,342 1383,328 1388,268 1393,256 1397,290 1402,268 1407,280 1412,348 1417,298 1422,295 1427,218 1432,232 1436,268 1447,252 1452,262 1461,250 1466,325',
    bot: '122,512 129,516 134,465 138,520 143,552 150,490 158,442 165,475 173,526 180,510 185,505 194,452 202,520 207,498 212,540 221,498 227,534 236,480 246,436 250,530 256,545 261,512 266,530 275,485 285,500 291,515 296,460 303,464 313,475 318,490 325,512 331,540 336,535 341,475 345,482 350,460 356,485 364,505 373,485 383,436 389,450 397,515 405,512 413,538 418,520 424,512 428,495 437,495 442,442 447,465 453,442 462,458 466,452 471,510 476,485 486,490 492,452 496,490 501,480 507,540 515,472 520,478 527,462 535,448 542,470 550,485 557,475 565,472 572,485 580,545 586,520 592,512 598,485 603,500 608,465 613,468 618,535 624,538 629,515 635,470 641,468 648,500 653,510 657,490 661,515 668,485 673,475 677,450 686,442 692,490 698,500 704,475 715,485 727,520 735,512 740,490 750,485 757,520 762,534 767,530 775,470 784,450 790,512 800,570 808,500 818,510 825,465 834,468 839,508 843,465 848,515 855,480 862,490 873,520 878,480 887,468 895,480 903,475 907,480 912,510 920,505 927,490 937,460 945,488 952,475 963,450 972,445 980,450 986,515 992,478 997,510 1001,490 1007,450 1016,515 1022,465 1030,436 1036,460 1040,436 1055,450 1060,500 1066,472 1070,490 1078,482 1090,488 1095,515 1100,485 1110,470 1115,452 1128,462 1133,495 1138,468 1146,480 1155,455 1163,480 1170,488 1178,478 1188,490 1193,470 1199,448 1207,535 1213,498 1220,490 1227,498 1232,500 1238,485 1246,465 1251,462 1256,470 1263,465 1271,448 1280,498 1285,485 1290,498 1297,462 1305,458 1312,500 1318,525 1324,562 1330,555 1338,562 1343,570 1348,532 1355,570 1362,545 1366,555 1372,500 1378,465 1383,520 1388,570 1397,512 1403,545 1408,510 1412,465 1418,530 1427,588 1432,520 1438,520 1442,575 1447,535 1452,545 1461,575 1466,470' },
  { x0: 832, sx: 2.279,
    top: '0,342 9,300 14,300 19,288 24,212 32,270 40,250 46,330 51,335 60,250 65,310 70,310 75,268 83,330 91,240 97,218 101,262 106,225 114,232 120,262 129,212 134,242 142,258 151,225 156,290 161,275 165,295 170,262 178,280 183,340 188,370 197,305 202,330 207,322 211,358 216,358 221,335 225,280 234,295 239,333 247,345 257,370 262,370 266,310 275,318 280,280 284,330 288,338 298,272 302,320 311,340 316,285 320,352 326,350 334,250 339,285 343,330 353,358 361,285 366,310 375,315 383,332 388,358 398,358 403,300 411,298 420,348 425,318 430,310 435,268 444,318 453,352 462,335 466,245 475,310 480,298 489,308 494,295 498,226 508,245 517,245 522,285 526,352 535,352 540,288 548,335 553,285 561,255 567,298 575,335 580,328 585,358 590,335 600,352 607,287 616,320 620,298 625,328 638,318 648,335 656,358 668,366 672,340 675,287 680,322 692,322 698,352 704,298 708,268 712,256 717,285 722,262 730,282 735,285 740,315 750,305 758,268 762,290 767,248 775,298 786,325 790,305 798,345 803,335 812,372 817,352 822,365 826,310 831,350 845,364 855,345 862,285 867,352 872,358 877,346 886,366 890,325 894,262 900,298 906,298 915,322 922,346 931,304 936,352 940,330 948,364 958,366 963,310 968,330 977,356 990,352 996,322 1000,325 1004,352 1008,322 1013,340 1018,322 1027,370 1033,368 1040,376 1060,376 1069,316 1073,340 1078,316 1083,345 1088,370 1096,328 1104,355 1109,340 1113,376 1118,365 1127,376 1132,352 1137,316 1142,358 1150,360 1159,376 1166,342 1173,366 1180,366 1192,384 1200,345 1205,303 1210,320 1215,322 1219,345 1228,372 1232,335 1241,376 1246,345 1251,366 1256,366 1265,382 1273,335 1278,358 1297,370 1301,303 1306,350 1310,340 1319,330 1325,365 1332,376 1341,310 1346,358 1349,340 1355,365 1364,368 1369,303 1377,358 1382,322 1387,376 1400,378 1409,316 1418,360 1432,376 1437,340 1446,382 1450,370 1465,390 1473,358 1482,358 1487,378 1494,384',
    bot: '0,458 10,540 18,535 24,592 33,555 38,575 46,490 55,500 60,555 65,520 74,580 83,500 92,588 101,555 106,582 111,580 120,550 124,570 134,586 143,555 147,550 152,580 156,525 161,575 170,512 175,540 180,500 184,445 190,445 197,495 202,495 207,478 211,495 216,448 220,455 225,535 230,515 238,480 243,490 252,448 261,442 266,508 275,495 280,522 288,470 298,540 302,490 307,508 311,465 316,515 321,455 325,455 334,545 343,500 348,508 357,472 362,508 370,480 375,526 380,490 385,470 393,436 403,512 411,515 417,472 425,520 430,515 435,556 439,550 443,495 453,454 461,485 466,520 471,500 475,520 480,502 484,520 489,508 494,520 498,592 503,555 508,555 512,538 516,560 521,510 526,460 530,475 535,470 540,526 548,472 552,524 562,520 571,532 576,482 580,478 590,490 599,448 604,490 612,495 617,508 625,490 634,472 648,485 656,452 663,452 671,475 675,534 680,485 684,498 690,475 699,465 704,475 712,526 718,514 730,515 740,500 750,480 762,532 770,515 775,520 781,510 786,470 790,528 799,472 804,475 808,450 817,455 827,472 831,450 835,460 845,442 850,460 854,445 862,522 867,460 876,485 885,454 894,550 900,495 908,490 914,468 925,465 931,502 936,466 940,485 950,442 958,455 965,472 975,460 985,450 990,475 1000,498 1004,475 1010,465 1017,485 1027,445 1035,436 1055,440 1059,430 1068,492 1076,485 1082,460 1090,440 1096,468 1104,445 1110,455 1118,430 1128,435 1137,472 1150,442 1155,440 1163,488 1172,450 1177,460 1192,422 1200,440 1205,485 1214,508 1219,440 1228,435 1232,472 1240,450 1245,466 1251,440 1265,430 1268,460 1273,502 1280,450 1296,440 1301,478 1306,450 1315,465 1323,455 1332,430 1341,485 1346,490 1355,450 1363,436 1369,504 1377,450 1382,480 1390,442 1400,440 1409,485 1418,440 1432,432 1437,502 1446,440 1452,455 1458,430 1465,418 1473,450 1482,442 1494,425' }
];
const trace = side => WAVE.flatMap(s => s[side].split(' ').map(p => {
  const [x, y] = p.split(',').map(Number);
  return [(s.x0 + x / s.sx).toFixed(1), ((y - 183) / 3).toFixed(1)];
}));
const upper = trace('top'), lower = trace('bot');
const shape = document.querySelector('.shape');
el('polygon', { points: upper.concat([...lower].reverse()).join(' '), fill: '#a2c1d7' }, shape);
[upper, lower].forEach(l => el('polyline', { points: l.join(' '), fill: 'none', stroke: '#fff', 'stroke-width': 2, 'stroke-linejoin': 'round' }, shape));
```
